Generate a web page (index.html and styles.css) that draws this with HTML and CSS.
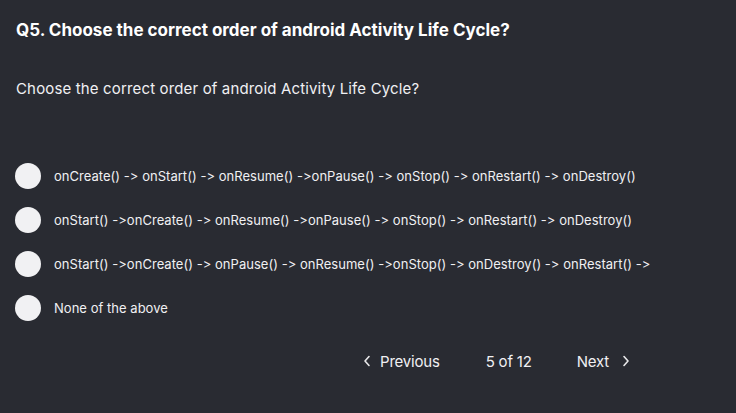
FILE: index.html
```html
<!DOCTYPE html>
<html>
<head>
<meta charset="utf-8">
<link rel="stylesheet" href="styles.css">
</head>
<body>
<div class="page">
  <h1 class="title">Q5. Choose the correct order of android Activity Life Cycle?</h1>
  <p class="question">Choose the correct order of android Activity Life Cycle?</p>
  <ul class="options">
    <li class="option"><span class="radio"></span><span class="label">onCreate() -&gt; onStart() -&gt; onResume() -&gt;onPause() -&gt; onStop() -&gt; onRestart() -&gt; onDestroy()</span></li>
    <li class="option"><span class="radio"></span><span class="label">onStart() -&gt;onCreate() -&gt; onResume() -&gt;onPause() -&gt; onStop() -&gt; onRestart() -&gt; onDestroy()</span></li>
    <li class="option"><span class="radio"></span><span class="label">onStart() -&gt;onCreate() -&gt; onPause() -&gt; onResume() -&gt;onStop() -&gt; onDestroy() -&gt; onRestart() -&gt;</span></li>
    <li class="option"><span class="radio"></span><span class="label">None of the above</span></li>
  </ul>
  <div class="nav">
    <span class="nav-btn prev"><svg width="8" height="12" viewBox="0 0 8 12"><path d="M6 1.5L2 6l4 4.5" fill="none" stroke="#e8e8ea" stroke-width="1.6" stroke-linecap="round" stroke-linejoin="round"/></svg>Previous</span>
    <span class="count">5 of 12</span>
    <span class="nav-btn next">Next<svg width="8" height="12" viewBox="0 0 8 12"><path d="M2 1.5L6 6l-4 4.5" fill="none" stroke="#e8e8ea" stroke-width="1.6" stroke-linecap="round" stroke-linejoin="round"/></svg></span>
  </div>
</div>
</body>
</html>
```
FILE: styles.css
```css
html, body {
  margin: 0;
  padding: 0;
  background: #292b32;
}
body {
  width: 736px;
  height: 413px;
  overflow: hidden;
  font-family: Inter, "Noto Sans", sans-serif;
  font-feature-settings: "calt" 0, "liga" 0;
  font-variant-ligatures: none;
  color: #f0f0f2;
}
.page {
  padding: 19px 16px 0 16px;
}
.title {
  margin: 0;
  font-size: 17px;
  font-weight: 700;
  line-height: 22px;
  color: #ffffff;
  letter-spacing: 0;
}
.question {
  margin: 38px 0 0 0;
  font-size: 15px;
  line-height: 20px;
  letter-spacing: 0.15px;
}
.options {
  list-style: none;
  margin: 64px 0 0 0;
  padding: 0;
  display: flex;
  flex-direction: column;
  gap: 18px;
}
.option {
  display: flex;
  align-items: center;
  height: 26px;
}
.radio {
  width: 26px;
  height: 26px;
  border-radius: 50%;
  background: #f1f1f3;
  flex: none;
  margin-right: 13px;
  margin-left: -1px;
}
.label {
  font-size: 13px;
  letter-spacing: 0.03px;
}
.nav {
  display: flex;
  align-items: center;
  margin: 25px 0 0 347px;
  height: 30px;
  font-size: 15px;
  letter-spacing: -0.2px;
}
.nav-btn {
  display: flex;
  align-items: center;
}
.prev svg { margin-right: 9px; }
.next svg { margin-left: 13px; }
.count { margin-left: 46px; }
.next { margin-left: 45px; }
```
